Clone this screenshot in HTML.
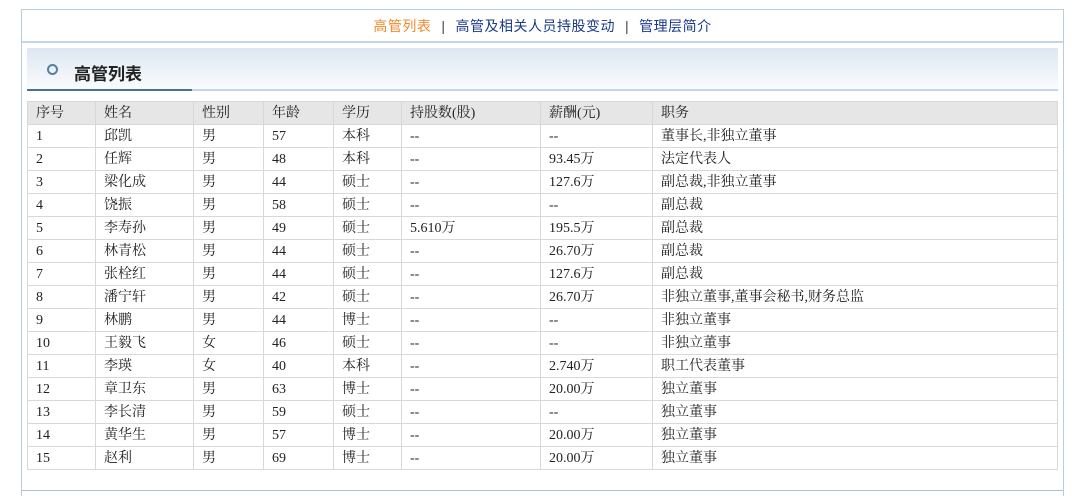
<!DOCTYPE html>
<html style="overflow:hidden;height:496px"><head><meta charset="utf-8"><style>
*{margin:0;padding:0;box-sizing:border-box}
body{width:1080px;height:496px;background:#fff;position:relative;overflow:hidden;font-family:"Liberation Serif","Noto Serif CJK SC",serif;}
.box{position:absolute;left:21px;top:9px;width:1043px;height:495px;border:1px solid #b8cde0;border-bottom:none}
.nav{position:absolute;left:0;top:0;width:100%;height:33px;border-bottom:2px solid #c3d6e8;text-align:center;font:14px "Liberation Sans","Noto Sans CJK SC",sans-serif;line-height:33px;color:#1a3a8a;letter-spacing:0.5px}
.nav .a{color:#f08a2c}
.nav .s{color:#444;margin:0 10px}
.hd{position:absolute;left:5px;top:38px;width:1031px;height:43px;background:linear-gradient(#dde6f2,#fafcfe);border-bottom:2px solid #c4d6e8}
.hd .ul{position:absolute;left:0;bottom:-2px;width:165px;height:2px;background:#4a6f94}
.hd .o{position:absolute;left:20px;top:16px;width:11px;height:11px;border:2px solid #5580a5;border-radius:50%}
.hd .t{position:absolute;left:47px;top:12px;font:bold 17px "Liberation Sans","Noto Sans CJK SC",sans-serif;color:#222}
table{position:absolute;left:5px;top:91px;width:1031px;border-collapse:collapse;font-size:14px;color:#222}
td,th{border:1px solid #d8d8d8;height:23px;padding:0 0 0 8px;text-align:left;font-weight:normal;line-height:21px;white-space:nowrap}
th{background:#e6e6e6;font-size:14px}
.bot{position:absolute;left:0;top:480px;width:100%;border-top:1px solid #a9c0d6}
</style></head><body>
<div class="box">
<div class="nav"><span class="a">高管列表</span><span class="s">|</span>高管及相关人员持股变动<span class="s">|</span>管理层简介</div>
<div class="hd"><div class="o"></div><div class="t">高管列表</div><div class="ul"></div></div>
<table>
<colgroup><col style="width:68px"><col style="width:98px"><col style="width:70px"><col style="width:70px"><col style="width:68px"><col style="width:139px"><col style="width:112px"><col></colgroup>
<tr><th>序号</th><th>姓名</th><th>性别</th><th>年龄</th><th>学历</th><th>持股数(股)</th><th>薪酬(元)</th><th>职务</th></tr>
<tr><td>1</td><td>邱凯</td><td>男</td><td>57</td><td>本科</td><td>--</td><td>--</td><td>董事长,非独立董事</td></tr>
<tr><td>2</td><td>任辉</td><td>男</td><td>48</td><td>本科</td><td>--</td><td>93.45万</td><td>法定代表人</td></tr>
<tr><td>3</td><td>梁化成</td><td>男</td><td>44</td><td>硕士</td><td>--</td><td>127.6万</td><td>副总裁,非独立董事</td></tr>
<tr><td>4</td><td>饶振</td><td>男</td><td>58</td><td>硕士</td><td>--</td><td>--</td><td>副总裁</td></tr>
<tr><td>5</td><td>李寿孙</td><td>男</td><td>49</td><td>硕士</td><td>5.610万</td><td>195.5万</td><td>副总裁</td></tr>
<tr><td>6</td><td>林青松</td><td>男</td><td>44</td><td>硕士</td><td>--</td><td>26.70万</td><td>副总裁</td></tr>
<tr><td>7</td><td>张栓红</td><td>男</td><td>44</td><td>硕士</td><td>--</td><td>127.6万</td><td>副总裁</td></tr>
<tr><td>8</td><td>潘宁轩</td><td>男</td><td>42</td><td>硕士</td><td>--</td><td>26.70万</td><td>非独立董事,董事会秘书,财务总监</td></tr>
<tr><td>9</td><td>林鹏</td><td>男</td><td>44</td><td>博士</td><td>--</td><td>--</td><td>非独立董事</td></tr>
<tr><td>10</td><td>王毅飞</td><td>女</td><td>46</td><td>硕士</td><td>--</td><td>--</td><td>非独立董事</td></tr>
<tr><td>11</td><td>李瑛</td><td>女</td><td>40</td><td>本科</td><td>--</td><td>2.740万</td><td>职工代表董事</td></tr>
<tr><td>12</td><td>章卫东</td><td>男</td><td>63</td><td>博士</td><td>--</td><td>20.00万</td><td>独立董事</td></tr>
<tr><td>13</td><td>李长清</td><td>男</td><td>59</td><td>硕士</td><td>--</td><td>--</td><td>独立董事</td></tr>
<tr><td>14</td><td>黄华生</td><td>男</td><td>57</td><td>博士</td><td>--</td><td>20.00万</td><td>独立董事</td></tr>
<tr><td>15</td><td>赵利</td><td>男</td><td>69</td><td>博士</td><td>--</td><td>20.00万</td><td>独立董事</td></tr>
</table>
<div class="bot"></div>
</div>
</body></html>
